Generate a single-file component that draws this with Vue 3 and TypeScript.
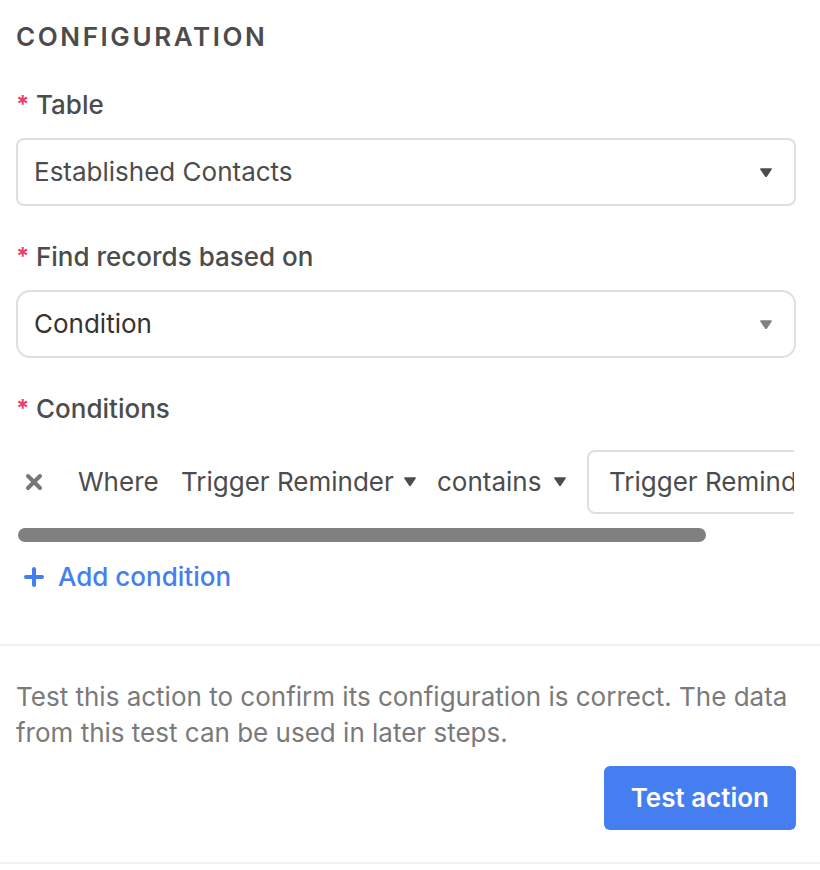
<script setup lang="ts">
import { ref } from 'vue'

const table = ref('Established Contacts')
const basis = ref('Condition')
const field = ref('Trigger Reminder')
const operator = ref('contains')
const value = ref('Trigger Reminder')
const hasCondition = ref(true)
const caret = 'M1.2 .2h9.6q1.6 0 .9 1.3L7 8.4q-1 1.2-2 0L.3 1.5Q-.4.2 1.2.2z'
</script>

<template>
  <main class="panel">
    <section class="config">
      <h1>CONFIGURATION</h1>

      <div class="field">
        <label for="table"><span class="star">*</span>Table</label>
        <div class="picker">
          <select id="table" v-model="table">
            <option>Established Contacts</option>
          </select>
          <svg class="caret" viewBox="0 0 12 10"><path :d="caret" /></svg>
        </div>
      </div>

      <div class="field">
        <label for="basis"><span class="star">*</span>Find records based on</label>
        <div class="picker round">
          <select id="basis" v-model="basis">
            <option>Condition</option>
          </select>
          <svg class="caret" viewBox="0 0 12 10"><path :d="caret" /></svg>
        </div>
      </div>

      <fieldset>
        <legend><span class="star">*</span>Conditions</legend>
        <div class="scroller">
          <div v-if="hasCondition" class="condition">
            <button class="remove" type="button" aria-label="Remove condition" @click="hasCondition = false">
              <svg viewBox="0 0 18 18"><path d="M3 3l12 12M15 3L3 15" /></svg>
            </button>
            <span class="where">Where</span>
            <div class="inline name">
              <select v-model="field" aria-label="Field">
                <option>Trigger Reminder</option>
              </select>
              <svg class="caret" viewBox="0 0 12 10"><path :d="caret" /></svg>
            </div>
            <div class="inline operator">
              <select v-model="operator" aria-label="Operator">
                <option>contains</option>
              </select>
              <svg class="caret" viewBox="0 0 12 10"><path :d="caret" /></svg>
            </div>
            <input v-model="value" class="value" type="text" aria-label="Value" />
          </div>
        </div>
        <div class="track"><div class="thumb"></div></div>
        <button class="add" type="button" @click="hasCondition = true">
          <svg viewBox="0 0 20 20"><path d="M10 2v16M2 10h16" /></svg>
          Add condition
        </button>
      </fieldset>
    </section>

    <section class="test">
      <p>Test this action to confirm its configuration is correct. The data from this test can be used in later steps.</p>
      <button class="run" type="button">Test action</button>
    </section>
  </main>
</template>

<style>
body {
  background: #fff;
}
</style>

<style scoped>
.panel {
  font-family: Inter, sans-serif;
  font-size: 26px;
  line-height: 36px;
  color: #4c4c4c;
}
.panel * {
  box-sizing: border-box;
}
button,
select,
input {
  font: inherit;
  color: inherit;
  background: none;
  border: 0;
  margin: 0;
  padding: 0;
}
select {
  appearance: none;
}
.config {
  padding: 19px 24px 49px 16px;
  border-bottom: 2px solid #f1f1f1;
}
h1 {
  margin: 0 0 32px;
  font-size: 26px;
  line-height: 36px;
  font-weight: 600;
  letter-spacing: 0.1em;
}
.field {
  margin-bottom: 33px;
}
label,
legend {
  display: flex;
  align-items: center;
  padding: 0;
  margin-bottom: 15px;
  font-weight: 500;
}
.star {
  width: 20px;
  font-size: 24px;
  font-weight: 700;
  color: #e8426a;
}
.picker {
  display: flex;
  position: relative;
}
.picker select {
  width: 100%;
  height: 68px;
  padding: 0 48px 0 16px;
  border: 2px solid #dfdfdf;
  border-radius: 8px;
}
.picker.round select {
  border-radius: 14px;
  color: #333;
}
.caret {
  width: 12px;
  height: 10px;
  fill: #4c4c4c;
  pointer-events: none;
}
.picker .caret {
  position: absolute;
  right: 24px;
  top: 30px;
}
.round .caret {
  fill: #808080;
}
fieldset {
  border: 0;
  padding: 0;
  margin: 0;
  min-width: 0;
}
.scroller {
  overflow: hidden;
  margin: 8px 2px 0;
}
.condition {
  display: flex;
  align-items: center;
  width: 882px;
}
.remove,
.add svg {
  display: flex;
}
.remove svg {
  width: 18px;
  height: 18px;
  fill: none;
  stroke: #777;
  stroke-width: 4;
  stroke-linecap: round;
}
.remove {
  padding: 7px;
}
.where {
  width: 103px;
  margin-left: 28px;
}
.inline {
  display: flex;
  align-items: center;
  justify-content: space-between;
}
.name {
  width: 235px;
  margin-right: 21px;
}
.operator {
  width: 129px;
  margin-right: 21px;
}
.value {
  flex: 1;
  min-width: 0;
  height: 64px;
  padding: 0 20px 2px;
  border: 2px solid #dfdfdf;
  border-radius: 8px;
}
.track {
  margin: 14px 2px 0;
}
.thumb {
  width: calc(100% - 88px);
  height: 14px;
  border-radius: 7px;
  background: #808080;
}
.add {
  display: flex;
  align-items: center;
  gap: 14px;
  margin-top: 17px;
  padding-left: 8px;
  font-weight: 500;
  color: #457ef0;
}
.add svg {
  width: 20px;
  height: 20px;
  fill: none;
  stroke: currentColor;
  stroke-width: 4;
  stroke-linecap: round;
}
.test {
  display: flex;
  flex-direction: column;
  padding: 33px 24px 32px 16px;
  border-bottom: 2px solid #f1f1f1;
}
p {
  margin: 0 0 15px;
  color: #7a7a7a;
}
.run {
  align-self: flex-end;
  padding: 14px 27px;
  border-radius: 6px;
  background: #457ef0;
  color: #fff;
  font-weight: 600;
}
</style>
